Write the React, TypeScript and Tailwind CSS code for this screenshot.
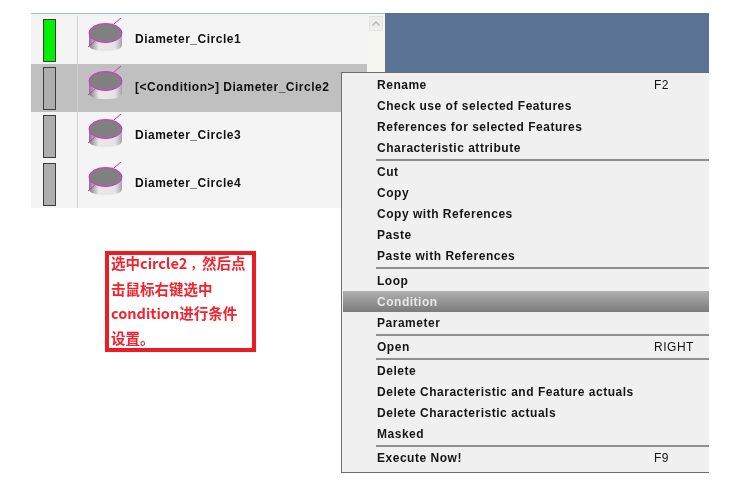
const rows = [
  { name: 'Diameter_Circle1', active: true },
  { name: '[<Condition>] Diameter_Circle2', selected: true },
  { name: 'Diameter_Circle3' },
  { name: 'Diameter_Circle4' },
]

const menu = [
  [{ label: 'Rename', key: 'F2' }, { label: 'Check use of selected Features' }, { label: 'References for selected Features' }, { label: 'Characteristic attribute' }],
  [{ label: 'Cut' }, { label: 'Copy' }, { label: 'Copy with References' }, { label: 'Paste' }, { label: 'Paste with References' }],
  [{ label: 'Loop' }, { label: 'Condition', active: true }, { label: 'Parameter' }],
  [{ label: 'Open', key: 'RIGHT' }],
  [{ label: 'Delete' }, { label: 'Delete Characteristic and Feature actuals' }, { label: 'Delete Characteristic actuals' }, { label: 'Masked' }],
  [{ label: 'Execute Now!', key: 'F9' }],
]

function CylinderIcon() {
  return (
    <svg width="38" height="38" viewBox="0 0 38 38" className="shrink-0">
      <defs>
        <linearGradient id="cyl" x1="0" x2="1" y1="0" y2="0">
          <stop offset="0" stopColor="#7c7c7c" />
          <stop offset="0.3" stopColor="#e8e8e8" />
          <stop offset="0.8" stopColor="#e4e4e4" />
          <stop offset="1" stopColor="#a5a5a5" />
        </linearGradient>
      </defs>
      <path d="M2 16v12c0 4 7 6 16.5 6S35 32 35 28V16z" fill="url(#cyl)" />
      <ellipse cx="18.5" cy="16" rx="16.5" ry="9.5" fill="#808080" stroke="#f020e0" strokeWidth="1" />
      <path d="M27 7l7-6M1 30l7-6" stroke="#f020e0" strokeWidth="1" fill="none" />
    </svg>
  )
}

function ListRow({ name, active, selected }: { name: string; active?: boolean; selected?: boolean }) {
  return (
    <div className={`flex h-12 items-center ${selected ? 'bg-[#c0c0c0]' : 'bg-[#f4f4f4]'}`}>
      <div className="flex h-full w-[47px] shrink-0 items-center justify-center border-r border-[#d0d0d0] pr-[9px]">
        <div className={`h-[43px] w-[13px] border border-[#3c3c3c] ${active ? 'bg-[#00f000]' : 'bg-[#aeaeae]'}`} />
      </div>
      <div className="ml-[9px] -mt-[8px]">
        <CylinderIcon />
      </div>
      <span className="ml-[10px] -mt-[2px] whitespace-nowrap text-[12px] font-bold tracking-[0.5px] text-[#111]">{name}</span>
    </div>
  )
}

function ContextMenu() {
  return (
    <div className="absolute left-[341px] top-[72px] w-[368px] border-b border-l border-t border-[#6e6e6e] bg-[#f0f0f0] pb-[4px] pl-[1px] pt-[1px] text-[12px] font-bold tracking-[0.52px] text-[#151515]">
      {menu.map((group, i) => (
        <div key={i}>
          {i > 0 && (
            <div className={`flex items-center pl-[33px] ${i === 2 ? 'h-[4px]' : 'h-[3px]'}`}>
              <div className="h-[2px] w-full bg-[#8f8f8f]" />
            </div>
          )}
          {group.map((item) => (
            <div
              key={item.label}
              className={`flex h-[21px] items-center pl-[34px] ${item.active ? 'bg-gradient-to-b from-[#b0b0b0] to-[#7c7c7c] text-[#e8e8e8]' : ''}`}
            >
              <span className="w-[277px] shrink-0 whitespace-nowrap">{item.label}</span>
              {item.key && <span className="font-medium">{item.key}</span>}
            </div>
          ))}
        </div>
      ))}
    </div>
  )
}

export default function App() {
  return (
    <div className="relative h-[492px] w-[730px] overflow-hidden bg-white pl-[31px] pt-[13px] font-['Liberation_Sans',sans-serif] blur-[0.35px]">
      <div className="flex items-start">
        <div className="w-[336px] border-t border-[#a9bdd4] bg-[#f4f4f4] pt-[2px]">
          {rows.map((row) => (
            <ListRow key={row.name} {...row} />
          ))}
        </div>
        <div className="h-[59px] w-[18px] border-t border-[#a9bdd4] bg-[#f6f6f0] pl-[2px] pt-[2px]">
          <div className="flex h-[15px] w-[14px] items-center justify-center border border-[#e4e4dc] bg-[#eeeeea]">
            <svg width="8" height="5" viewBox="0 0 8 5">
              <path d="M0.5 4.5L4 1l3.5 3.5" stroke="#b8b8b8" strokeWidth="1.5" fill="none" />
            </svg>
          </div>
        </div>
        <div className="h-[59px] w-[324px] bg-[#5a7395]" />
      </div>

      <div className="ml-[74px] mt-[43px] h-[101px] w-[151px] border-4 border-[#ed1c24] pl-[2px] font-['Noto_Sans_CJK_SC',sans-serif] text-[14.5px] font-bold leading-[24.5px] text-[#f5222d]">
        <div className="-mt-[4px]">
          选中circle2<span className="ml-[3px] text-[11.5px]">，</span>然后点
          <br />
          击鼠标右键选中
          <br />
          condition进行条件
          <br />
          设置。
        </div>
      </div>

      <ContextMenu />
    </div>
  )
}
